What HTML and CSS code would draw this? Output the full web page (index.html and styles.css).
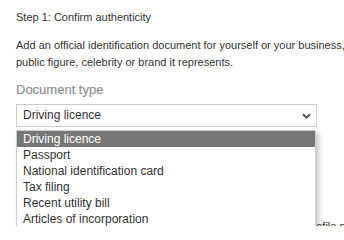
FILE: index.html
```html
<!DOCTYPE html>
<html lang="en">
<head>
<meta charset="utf-8">
<title>Confirm authenticity</title>
<link rel="stylesheet" href="styles.css">
</head>
<body>
<main class="page">
  <p class="step">Step 1: Confirm authenticity</p>
  <p class="intro">Add an official identification document for yourself or your business, public figure, celebrity or brand it represents.</p>
  <div class="field">
    <label class="label">Document type</label>
    <div class="select-wrap">
      <div class="select">
        <span class="select-value">Driving licence</span>
        <svg class="chevron" width="9" height="6" viewBox="0 0 9 6" aria-hidden="true"><path d="M1 1.2 L4.5 4.6 L8 1.2" fill="none" stroke="#555" stroke-width="2"/></svg>
      </div>
      <ul class="options">
        <li class="option selected">Driving licence</li>
        <li class="option">Passport</li>
        <li class="option">National identification card</li>
        <li class="option">Tax filing</li>
        <li class="option">Recent utility bill</li>
        <li class="option">Articles of incorporation</li>
      </ul>
    </div>
  </div>
  <p class="note">Please upload a copy of the document which matches your profile name.</p>
</main>
</body>
</html>
```

FILE: styles.css
```css
html, body {
  margin: 0;
  padding: 0;
  background: #ffffff;
  overflow: hidden;
}

.page {
  width: 344px;
  height: 226px;
  overflow: hidden;
  padding: 9px 0 0 16px;
  box-sizing: border-box;
  font-family: "Liberation Sans", Arial, sans-serif;
  color: #333333;
}

.step {
  margin: 0;
  font-size: 11px;
  line-height: 17px;
}

.intro {
  margin: 11px 0 0 0;
  font-size: 11px;
  line-height: 17px;
  width: 340px;
}

.field {
  margin-top: 11px;
  display: flex;
  flex-direction: column;
  align-items: flex-start;
}

.label {
  font-size: 13px;
  line-height: 16px;
  color: #8f8f8f;
  -webkit-text-stroke: 0.2px #8f8f8f;
}

.select-wrap {
  position: relative;
  margin-top: 6px;
  width: 301px;
}

.select {
  box-sizing: border-box;
  width: 301px;
  height: 23px;
  border: 1px solid #cccccc;
  display: flex;
  align-items: center;
  justify-content: space-between;
  padding: 0 5px 0 6px;
  font-size: 12px;
  line-height: 21px;
  color: #333333;
}

.chevron {
  display: block;
  margin-top: 1px;
}

.options {
  position: absolute;
  top: 26px;
  left: 0;
  width: 300px;
  box-sizing: border-box;
  margin: 0;
  padding: 0;
  list-style: none;
  background: #ffffff;
  border: 1px solid #cfcfcf;
  box-shadow: 3px 3px 5px rgba(0, 0, 0, 0.22);
  z-index: 2;
}

.option {
  font-size: 12px;
  line-height: 16px;
  padding: 0 6px;
  color: #333333;
  white-space: nowrap;
}

.option.selected {
  background: #777777;
  color: #ffffff;
}

.note {
  margin: 91px 0 0 0;
  font-size: 11px;
  line-height: 17px;
  white-space: nowrap;
}
```
